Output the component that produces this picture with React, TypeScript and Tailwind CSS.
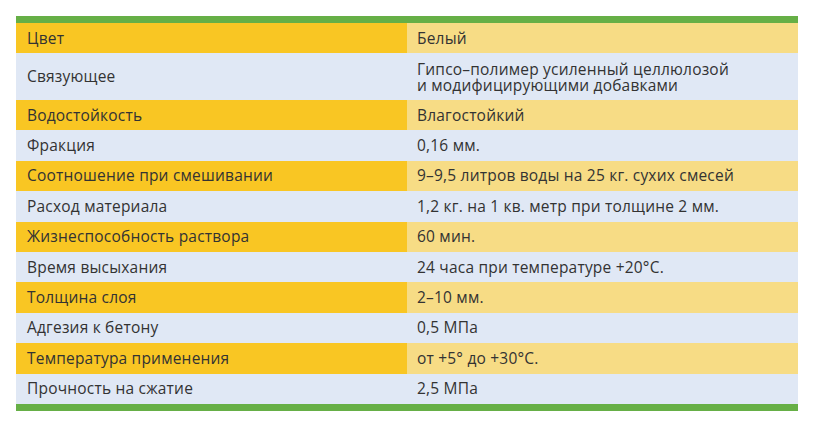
import React from 'react';

const rows: { name: string; value: React.ReactNode; tall?: boolean }[] = [
  { name: 'Цвет', value: 'Белый' },
  {
    name: 'Связующее',
    value: (
      <div className="flex flex-col">
        <span className="leading-[16px]">Гипсо–полимер усиленный целлюлозой</span>
        <span className="leading-[16px]">и модифицирующими добавками</span>
      </div>
    ),
    tall: true,
  },
  { name: 'Водостойкость', value: 'Влагостойкий' },
  { name: 'Фракция', value: '0,16 мм.' },
  { name: 'Соотношение при смешивании', value: '9–9,5 литров воды на 25 кг. сухих смесей' },
  { name: 'Расход материала', value: '1,2 кг. на 1 кв. метр при толщине 2 мм.' },
  { name: 'Жизнеспособность раствора', value: '60 мин.' },
  { name: 'Время высыхания', value: '24 часа при температуре +20°С.' },
  { name: 'Толщина слоя', value: '2–10 мм.' },
  { name: 'Адгезия к бетону', value: '0,5 МПа' },
  { name: 'Температура применения', value: 'от +5° до +30°С.' },
  { name: 'Прочность на сжатие', value: '2,5 МПа' },
];

export default function App() {
  return (
    <div className="w-[816px] h-[426px] bg-white pt-4 px-4 font-['Open_Sans',sans-serif] text-[15.5px] tracking-[0.2px] text-[#333]">
      <div className="w-[782px]">
        <div className="h-[7px] bg-[#66af46]"></div>
        {rows.map((r, i) => {
          const odd = i % 2 === 0;
          return (
            <div
              key={r.name}
              className={`grid grid-cols-2 ${r.tall ? 'h-[46.6px]' : 'h-[30.4px]'} ${odd ? 'bg-[#f9c623]' : 'bg-[#e0e8f5]'}`}
            >
              <div className="flex items-center pl-[11px]">{r.name}</div>
              <div className={`flex items-center pl-[10px] ${odd ? 'bg-[#f7dc85]' : ''}`}>{r.value}</div>
            </div>
          );
        })}
        <div className="h-[7px] bg-[#66af46]"></div>
      </div>
    </div>
  );
}
